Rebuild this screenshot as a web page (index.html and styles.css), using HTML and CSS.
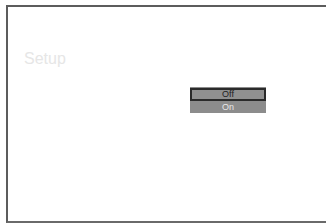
FILE: index.html
```html
<!DOCTYPE html>
<html lang="en">
<head>
    <meta charset="UTF-8">
    <meta name="viewport" content="width=device-width, initial-scale=1.0">
    <title>Setup</title>
    <link rel="stylesheet" href="styles.css">
</head>
<body>
    <div class="screen">
        <h2 class="title">Setup</h2>
        <ul class="menu">
            <li class="item selected">Off</li>
            <li class="item">On</li>
        </ul>
    </div>
</body>
</html>
```
FILE: styles.css
```css
body { margin: 0; background: #fff; font-family: "Liberation Sans", Arial, sans-serif; overflow: hidden; }
.screen { margin: 5px 0 0 6px; height: 218px; box-sizing: border-box; border-top: 2px solid #5c5c5c; border-left: 2px solid #5c5c5c; border-bottom: 2px solid #6a6a6a; padding: 43px 0 0 16px; }
.title { margin: 0; font-size: 16px; font-weight: normal; line-height: 18px; color: #e6e6e6; }
.menu { list-style: none; margin: 19px 0 0 166px; padding: 1px 0 0; width: 76px; background: #8c8c8c; }
.item { height: 11px; font-size: 9px; line-height: 11px; text-align: center; color: #e8e8e8; }
.item.selected { height: 9px; line-height: 9px; margin-bottom: 1px; border: 2px solid #2a2a2a; color: #222; background: #909090; }
```
